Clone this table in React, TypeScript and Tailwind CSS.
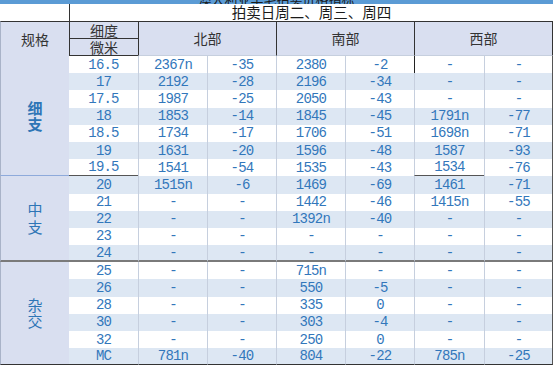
import React from "react";

const rows: string[][] = [
  ["16.5", "2367n", "-35", "2380", "-2", "-", "-"],
  ["17", "2192", "-28", "2196", "-34", "-", "-"],
  ["17.5", "1987", "-25", "2050", "-43", "-", "-"],
  ["18", "1853", "-14", "1845", "-45", "1791n", "-77"],
  ["18.5", "1734", "-17", "1706", "-51", "1698n", "-71"],
  ["19", "1631", "-20", "1596", "-48", "1587", "-93"],
  ["19.5", "1541", "-54", "1535", "-43", "1534", "-76"],
  ["20", "1515n", "-6", "1469", "-69", "1461", "-71"],
  ["21", "-", "-", "1442", "-46", "1415n", "-55"],
  ["22", "-", "-", "1392n", "-40", "-", "-"],
  ["23", "-", "-", "-", "-", "-", "-"],
  ["24", "-", "-", "-", "-", "-", "-"],
  ["25", "-", "-", "715n", "-", "-", "-"],
  ["26", "-", "-", "550", "-5", "-", "-"],
  ["28", "-", "-", "335", "0", "-", "-"],
  ["30", "-", "-", "303", "-4", "-", "-"],
  ["32", "-", "-", "250", "0", "-", "-"],
  ["MC", "781n", "-40", "804", "-22", "785n", "-25"],
];

const groups: Record<number, { label: string; span: string; bold: boolean; border: string; lead: string }> = {
  0: { label: "细支", span: "row-span-7", bold: true, border: "border-b border-b-[#8eaadb]", lead: "leading-[16px]" },
  7: { label: "中支", span: "row-span-5", bold: false, border: "border-b-2 border-b-[#7a7a7a]", lead: "leading-[18px]" },
  12: { label: "杂交", span: "row-span-6", bold: false, border: "border-b border-b-[#333333]", lead: "leading-[16px]" },
};

function cellBorder(r: number, c: number): string {
  const cls: string[] = [];
  if (c >= 1) {
    if (r === 0 && c === 5) cls.push("border-l border-l-[#222222]");
    else cls.push("border-l border-l-[#c6cfde]");
  }
  if (c === 6) cls.push("border-r border-r-[#555555]");
  if (r === 6 && (c === 0 || c === 5)) cls.push("border-b border-b-[#555555]");
  if (r === 11) cls.push("border-b-2 border-b-[#7a7a7a]");
  if (r === 17) cls.push("border-b border-b-[#333333]");
  return cls.join(" ");
}

export default function App() {
  const cells: React.ReactNode[] = [];
  rows.forEach((row, r) => {
    const g = groups[r];
    if (g) {
      cells.push(
        <div
          key={`g${r}`}
          className={`${g.span} ${g.border} ${g.lead} bg-[#d9dff0] border-l border-l-[#a9b3c8] flex flex-col items-center justify-center text-[15px] text-[#2e75b6] font-['Noto_Sans_CJK_SC',sans-serif] ${g.bold ? "font-bold" : "font-normal"}`}
        >
          <span>{g.label[0]}</span>
          <span>{g.label[1]}</span>
        </div>
      );
    }
    row.forEach((v, c) => {
      const bg = r % 2 === 1 ? "bg-[#dde7f3]" : "bg-white";
      cells.push(
        <div
          key={`${r}-${c}`}
          className={`${bg} ${cellBorder(r, c)} flex items-center justify-center text-[14px] tracking-[-0.8px] leading-none text-[#3277bb] font-['Liberation_Mono',monospace]`}
        >
          {v}
        </div>
      );
    });
  });

  return (
    <div className="w-[554px] h-[368px] bg-white overflow-hidden">
      <div className="grid w-[553px] grid-cols-[69px_69px_69px_69px_69px_69px_70px_69px] grid-rows-[4px_17px_17.5px_17.5px_repeat(18,17.2px)] font-['Noto_Sans_CJK_SC',sans-serif]">
        <div className="col-span-8 bg-[#5b9bd5] overflow-hidden flex items-end justify-center">
          <span className="text-[13px] leading-none mb-[-1px] text-[#1a1a1a] whitespace-nowrap">
            澳大利亚羊毛拍卖价格指标
          </span>
        </div>
        <div className="bg-white" />
        <div className="col-span-7 bg-white border-l border-l-[#333333] flex items-center justify-center text-[14.5px] leading-none text-[#1a1a1a]">
          拍卖日周二、周三、周四
        </div>

        <div className="row-span-2 bg-[#d9dff0] border-t border-t-[#333333] border-l border-l-[#a9b3c8] flex items-center justify-center text-[14px] text-[#333333]">
          规格
        </div>
        <div className="bg-[#d9dff0] border-t border-t-[#333333] border-l border-l-[#333333] border-b border-b-[#333333] flex items-center justify-center text-[14px] leading-none text-[#333333]">
          细度
        </div>
        <div className="col-span-2 row-span-2 bg-[#d9dff0] border-t border-t-[#333333] border-l border-l-[#333333] border-b border-b-[#c6cfde] flex items-center justify-center text-[14px] text-[#333333]">
          北部
        </div>
        <div className="col-span-2 row-span-2 bg-[#d9dff0] border-t border-t-[#333333] border-l border-l-[#333333] border-b border-b-[#c6cfde] flex items-center justify-center text-[14px] text-[#333333]">
          南部
        </div>
        <div className="col-span-2 row-span-2 bg-[#d9dff0] border-t border-t-[#333333] border-l border-l-[#333333] border-r border-r-[#333333] border-b border-b-[#c6cfde] flex items-center justify-center text-[14px] text-[#333333]">
          西部
        </div>
        <div className="bg-[#d9dff0] border-l border-l-[#333333] border-b border-b-[#333333] flex items-center justify-center text-[14px] leading-none text-[#333333]">
          微米
        </div>

        {cells}
      </div>
    </div>
  );
}
